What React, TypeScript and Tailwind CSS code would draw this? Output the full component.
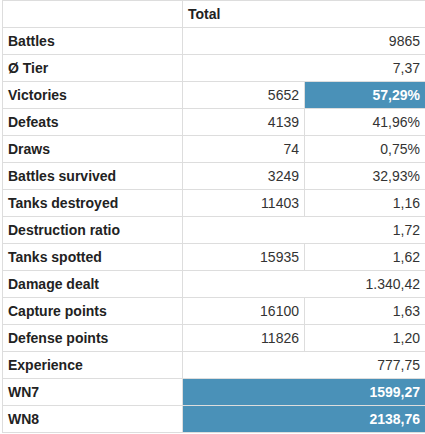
const rows: { label: string; count?: string; value: string; hi?: boolean; hiValue?: boolean }[] = [
  { label: 'Battles', value: '9865' },
  { label: 'Ø Tier', value: '7,37' },
  { label: 'Victories', count: '5652', value: '57,29%', hiValue: true },
  { label: 'Defeats', count: '4139', value: '41,96%' },
  { label: 'Draws', count: '74', value: '0,75%' },
  { label: 'Battles survived', count: '3249', value: '32,93%' },
  { label: 'Tanks destroyed', count: '11403', value: '1,16' },
  { label: 'Destruction ratio', value: '1,72' },
  { label: 'Tanks spotted', count: '15935', value: '1,62' },
  { label: 'Damage dealt', value: '1.340,42' },
  { label: 'Capture points', count: '16100', value: '1,63' },
  { label: 'Defense points', count: '11826', value: '1,20' },
  { label: 'Experience', value: '777,75' },
  { label: 'WN7', value: '1599,27', hi: true },
  { label: 'WN8', value: '2138,76', hi: true },
];

const cell = 'border border-[#dddddd] h-[27px] px-[5px] py-0 leading-[20px]';
const blue = 'bg-[#4a91b8] text-white font-bold';

export default function App() {
  return (
    <div className="bg-white w-[425px] h-[434px] pl-[2px] font-['Liberation_Sans',Arial,sans-serif] text-[14px] text-[#333]">
      <table className="w-[423px] border-collapse table-fixed">
        <colgroup>
          <col className="w-[180px]" />
          <col className="w-[122px]" />
          <col className="w-[121px]" />
        </colgroup>
        <tbody>
          <tr>
            <td className={cell} />
            <td colSpan={2} className={`${cell} font-bold text-[#222]`}>
              Total
            </td>
          </tr>
          {rows.map((r) => (
            <tr key={r.label}>
              <td className={`${cell} font-bold text-[#222]`}>{r.label}</td>
              {r.count ? (
                <>
                  <td className={`${cell} text-right`}>{r.count}</td>
                  <td className={`${cell} text-right ${r.hiValue ? blue : ''}`}>{r.value}</td>
                </>
              ) : (
                <td colSpan={2} className={`${cell} text-right ${r.hi ? blue : ''}`}>
                  {r.value}
                </td>
              )}
            </tr>
          ))}
        </tbody>
      </table>
    </div>
  );
}
